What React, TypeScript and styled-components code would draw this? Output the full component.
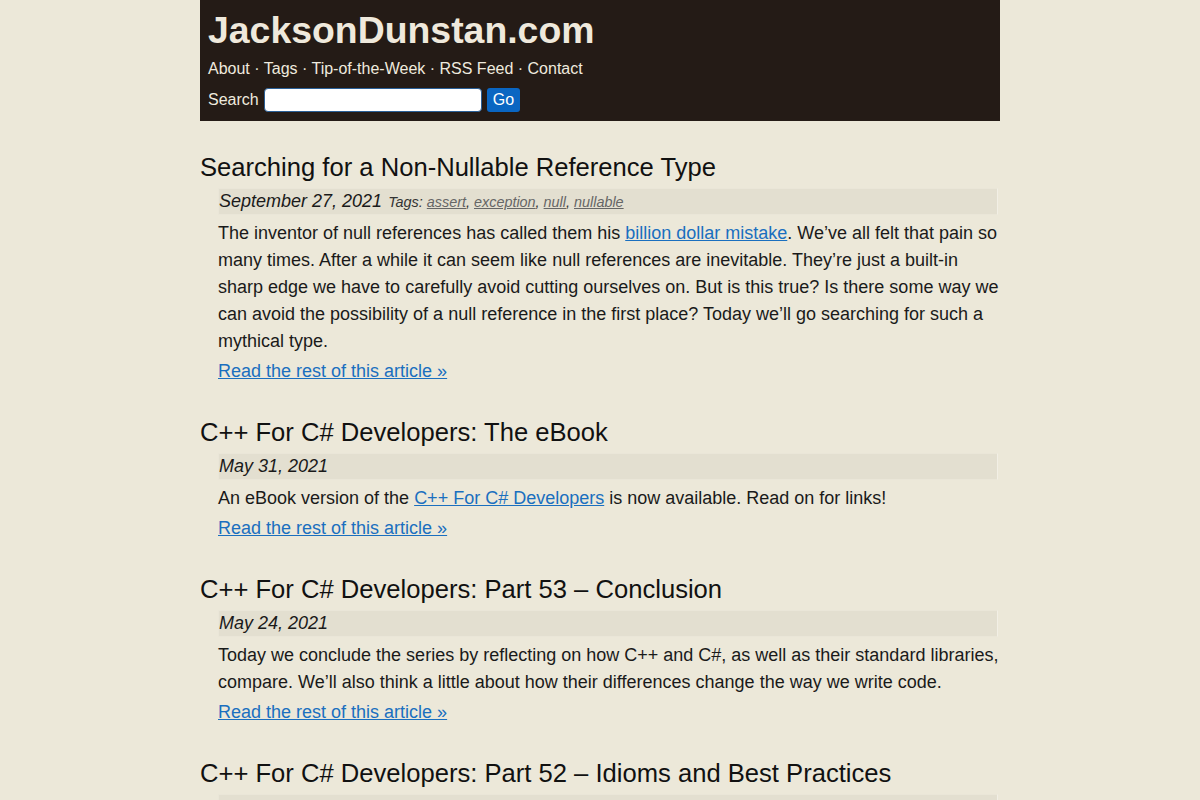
import React from 'react';
import styled, { createGlobalStyle } from 'styled-components';

const GlobalStyle = createGlobalStyle`
	body {
		margin: 0;
		background: #ece8d9;
		font-family: "Liberation Sans", Arial, sans-serif;
		color: #1a1a1a;
	}
`;

interface Post {
	title: string;
	date: string;
	tags?: string[];
	body: React.ReactNode;
}

const posts: Post[] = [
	{
		title: 'Searching for a Non-Nullable Reference Type',
		date: 'September 27, 2021',
		tags: ['assert', 'exception', 'null', 'nullable'],
		body: (
			<>
				The inventor of null references has called them his <a href="#">billion dollar mistake</a>. We’ve all felt that pain so many times. After a while it can seem like null references are inevitable. They’re just a built-in sharp edge we have to carefully avoid cutting ourselves on. But is this true? Is there some way we can avoid the possibility of a null reference in the first place? Today we’ll go searching for such a mythical type.
			</>
		),
	},
	{
		title: 'C++ For C# Developers: The eBook',
		date: 'May 31, 2021',
		body: (
			<>
				An eBook version of the <a href="#">C++ For C# Developers</a> is now available. Read on for links!
			</>
		),
	},
	{
		title: 'C++ For C# Developers: Part 53 – Conclusion',
		date: 'May 24, 2021',
		body: (
			<>
				Today we conclude the series by reflecting on how C++ and C#, as well as their standard libraries, compare. We’ll also think a little about how their differences change the way we write code.
			</>
		),
	},
	{
		title: 'C++ For C# Developers: Part 52 – Idioms and Best Practices',
		date: 'May 17, 2021',
		body: (
			<>
				Today we’ll look at some idioms and best practices for writing C++ code.
			</>
		),
	},
];

function App() {
	return (
		<>
			<GlobalStyle />
			<Page>
				<Header>
					<SiteTitle>JacksonDunstan.com</SiteTitle>
					<Nav>
						<a href="#">About</a> · <a href="#">Tags</a> · <a href="#">Tip-of-the-Week</a> · <a href="#">RSS Feed</a> · <a href="#">Contact</a>
					</Nav>
					<SearchForm onSubmit={ (e) => e.preventDefault() }>
						<label>Search</label>
						<SearchInput type="text" />
						<GoButton type="submit">Go</GoButton>
					</SearchForm>
				</Header>
				<Posts>
					{ posts.map((post) => (
						<Article key={ post.title }>
							<PostTitle>{ post.title }</PostTitle>
							<Meta>
								<PostDate>{ post.date }</PostDate>
								{ post.tags && (
									<Tags>
										Tags:{ ' ' }
										{ post.tags.map((tag, i) => (
											<React.Fragment key={ tag }>
												<a href="#">{ tag }</a>
												{ i < post.tags!.length - 1 && ', ' }
											</React.Fragment>
										)) }
									</Tags>
								) }
							</Meta>
							<Summary>{ post.body }</Summary>
							<ReadMore href="#">Read the rest of this article »</ReadMore>
						</Article>
					)) }
				</Posts>
			</Page>
		</>
	);
}

const Page = styled.div`
	width: 800px;
	margin: 0 auto;
`;

const Header = styled.header`
	background: #241b16;
	padding: 9px 8px 9px 8px;
	color: #efeadf;
`;

const SiteTitle = styled.h1`
	margin: 0;
	font-size: 37.4px;
	line-height: 42px;
	font-weight: bold;
	color: #efe9dc;
`;

const Nav = styled.nav`
	margin-top: 8px;
	font-size: 16px;
	line-height: 20px;
	color: #e8e3d6;

	a {
		color: #efeadf;
		text-decoration: none;
	}
`;

const SearchForm = styled.form`
	margin-top: 9px;
	display: flex;
	align-items: center;
	height: 24px;
	font-size: 16px;

	label {
		margin-right: 5px;
	}
`;

const SearchInput = styled.input`
	width: 218px;
	height: 24px;
	box-sizing: border-box;
	border: 1px solid #2a5f96;
	border-radius: 4px;
	background: #fff;
	margin-right: 5px;
`;

const GoButton = styled.button`
	height: 24px;
	padding: 0 6px;
	border: none;
	border-radius: 3px;
	background: #0a66c2;
	color: #fff;
	font-family: "Liberation Sans", Arial, sans-serif;
	font-size: 16px;
`;

const Posts = styled.main`
	padding-top: 31px;
`;

const Article = styled.article`
	margin-bottom: 32px;
`;

const PostTitle = styled.h2`
	margin: 0;
	font-size: 25.6px;
	line-height: 30px;
	font-weight: normal;
	color: #111;
`;

const Meta = styled.div`
	margin: 6px 2px 0 18px;
	height: 27px;
	box-sizing: border-box;
	display: flex;
	align-items: center;
	gap: 6px;
	background: #e3dfd0;
	border: 1px solid #eae6d8;
	border-right-color: #f2efe5;
	font-style: italic;
`;

const PostDate = styled.span`
	font-size: 18px;
	color: #1a1a1a;
`;

const Tags = styled.span`
	font-size: 14.4px;
	color: #333;

	a {
		color: #666;
	}
`;

const Summary = styled.p`
	margin: 5px 0 0 18px;
	font-size: 18px;
	line-height: 27px;

	a {
		color: #1a6fbf;
	}
`;

const ReadMore = styled.a`
	display: block;
	margin: 3px 0 0 18px;
	font-size: 18px;
	line-height: 27px;
	color: #1a6fbf;
`;

export default App;
